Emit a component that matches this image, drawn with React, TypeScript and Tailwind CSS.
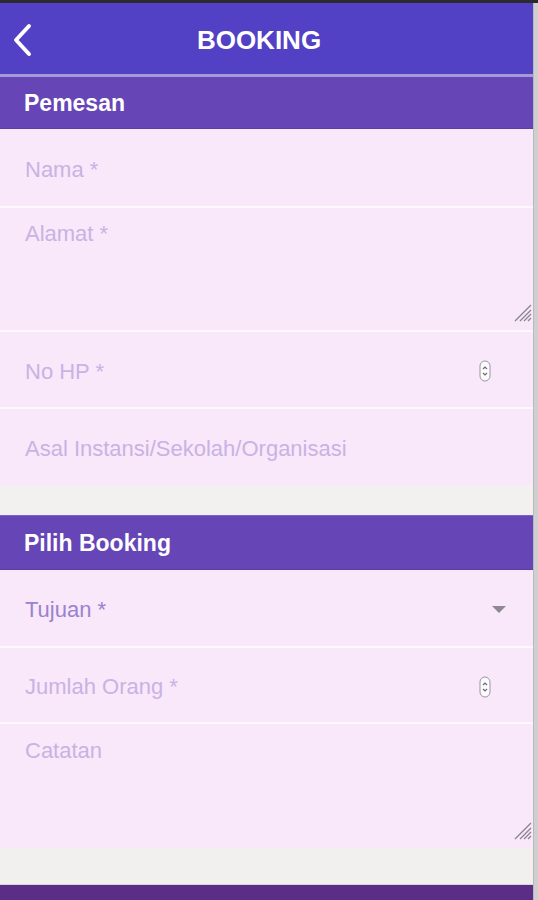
import React from "react";

const Spinner = () => (
  <svg width="12" height="22" viewBox="0 0 12 22">
    <rect x="1" y="1" width="10" height="20" rx="5" fill="#fdfbfd" stroke="#9a95a0" strokeWidth="1" />
    <polyline points="4,9 6,7 8,9" fill="none" stroke="#6e6a72" strokeWidth="1.2" />
    <polyline points="4,13 6,15 8,13" fill="none" stroke="#6e6a72" strokeWidth="1.2" />
  </svg>
);

const Resize = () => (
  <svg width="20" height="20" viewBox="0 0 20 20">
    <line x1="19" y1="3" x2="3" y2="19" stroke="#8a8290" strokeWidth="1.3" />
    <line x1="19" y1="8" x2="8" y2="19" stroke="#8a8290" strokeWidth="1.3" />
    <line x1="19" y1="12" x2="12" y2="19" stroke="#8a8290" strokeWidth="1.3" />
    <line x1="19" y1="16" x2="16" y2="19" stroke="#8a8290" strokeWidth="1.3" />
  </svg>
);

const Sep = () => <div className="h-[2px] shrink-0 bg-[#fdf7fe]" />;

export default function App() {
  return (
    <div
      className="w-[538px] h-[900px] overflow-hidden bg-[#cfcfd1]"
      style={{ fontFamily: '"Liberation Sans", Arial, sans-serif' }}
    >
      <div className="h-[3px] bg-[#2b2a2e]" />
      <div className="flex">
        <div className="w-[533px] flex flex-col">
          {/* Header */}
          <div className="h-[71px] shrink-0 bg-[#5240c5] flex items-center pt-[3px]">
            <div className="w-[44px] flex justify-center pl-[2px]">
              <svg width="22" height="34" viewBox="0 0 22 34">
                <polyline points="17,3 4,17 17,31" fill="none" stroke="#ffffff" strokeWidth="4" strokeLinecap="round" strokeLinejoin="round" />
              </svg>
            </div>
            <div className="flex-1 text-center text-white font-bold text-[26px] pr-[15px]">BOOKING</div>
            <div className="w-[44px]" />
          </div>
          <div className="h-[3px] shrink-0 bg-[#a49bd6]" />

          {/* Pemesan */}
          <div className="h-[52px] shrink-0 bg-[#6646b6] border-b border-[#5a3cab] flex items-center px-[24px] pt-[2px] text-white font-bold text-[23px]">
            Pemesan
          </div>
          <div className="h-[77px] shrink-0 bg-[#f8e8fa] flex items-center px-[25px] pt-[3px] text-[22px] text-[#c9b2e4]">Nama *</div>
          <Sep />
          <div className="h-[122px] shrink-0 bg-[#f8e8fa] relative px-[25px] pt-[14px] leading-[24px] text-[22px] text-[#c9b2e4]">
            Alamat *
            <div className="absolute right-[1px] bottom-[8px]">
              <Resize />
            </div>
          </div>
          <Sep />
          <div className="h-[75px] shrink-0 bg-[#f8e8fa] flex items-center justify-between pl-[25px] pr-[42px] pt-[3px] text-[22px] text-[#c9b2e4]">
            <span>No HP *</span>
            <Spinner />
          </div>
          <Sep />
          <div className="h-[76px] shrink-0 bg-[#f8e8fa] flex items-center px-[25px] pt-[2px] text-[22px] text-[#c9b2e4]">
            Asal Instansi/Sekolah/Organisasi
          </div>
          <div className="h-[30px] shrink-0 bg-[#f2f1ef]" />

          {/* Pilih Booking */}
          <div className="h-[55px] shrink-0 bg-[#6646b6] border-t border-[#7c62c4] border-b border-b-[#5a3cab] flex items-center px-[24px] pt-[2px] text-white font-bold text-[23px]">
            Pilih Booking
          </div>
          <div className="h-[76px] shrink-0 bg-[#f8e8fa] flex items-center justify-between pl-[25px] pr-[27px] pt-[3px] text-[22px] text-[#9a82cd]">
            <span>Tujuan *</span>
            <svg width="14" height="8" viewBox="0 0 14 8">
              <polygon points="0,0 14,0 7,7" fill="#8c8a8e" />
            </svg>
          </div>
          <Sep />
          <div className="h-[74px] shrink-0 bg-[#f8e8fa] flex items-center justify-between pl-[25px] pr-[42px] pt-[3px] text-[22px] text-[#c9b2e4]">
            <span>Jumlah Orang *</span>
            <Spinner />
          </div>
          <Sep />
          <div className="h-[124px] shrink-0 bg-[#f8e8fa] relative px-[25px] pt-[15px] leading-[24px] text-[22px] text-[#c9b2e4]">
            Catatan
            <div className="absolute right-[1px] bottom-[8px]">
              <Resize />
            </div>
          </div>
          <div className="h-[37px] shrink-0 bg-[#f1f0ee] border-b border-[#d8d6da]" />
          <div className="h-[15px] shrink-0 bg-[#5c2d87]" />
        </div>
        <div className="w-[5px] bg-[#cfcfd1] border-l border-[#b9b9bc]" />
      </div>
    </div>
  );
}
